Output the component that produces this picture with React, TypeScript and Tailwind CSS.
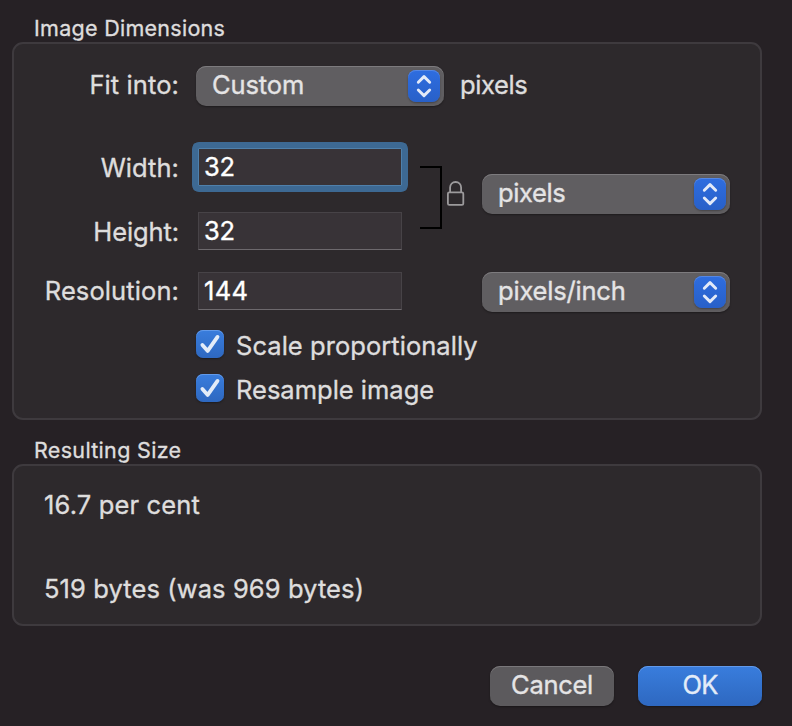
import React from "react";

function Stepper() {
  return (
    <span className="flex h-8 w-8 items-center justify-center rounded-[8px] bg-linear-to-b from-[#2e6de0] to-[#2860c8] shadow-[inset_0_1px_0_#5587e4,0_1px_2px_rgba(0,0,0,0.3)]">
      <svg width="32" height="32" viewBox="0 0 32 32" fill="none" stroke="#e3eaf8" strokeWidth="2.9" strokeLinecap="round" strokeLinejoin="round">
        <path d="M10.3 12.2L16 6.6l5.7 5.6M10.3 20l5.7 5.6 5.7-5.6" />
      </svg>
    </span>
  );
}

function Popup({ value, className }: { value: string; className: string }) {
  return (
    <button className="flex h-10 w-[248px] items-center justify-between rounded-[10px] bg-[#605e61] pr-1 pl-4 shadow-[inset_0_1px_0_#7d7b7e,0_1px_2px_rgba(0,0,0,0.35)]">
      <span className={`-mt-0.5 leading-[38px] text-[#e5e4e5] ${className}`}>{value}</span>
      <Stepper />
    </button>
  );
}

function Label({ text, className }: { text: string; className: string }) {
  return <label className={`mr-px w-[165px] text-right whitespace-nowrap ${className}`}>{text}</label>;
}

function Field({ value, className, focused = false }: { value: string; className: string; focused?: boolean }) {
  return (
    <div
      className={
        focused
          ? "ml-[18px] h-[38px] w-[204px] border border-[#4f80ab] bg-[#383337] shadow-[0_0_0_5px_#3d6993] outline-1 outline-offset-[5px] outline-[#3d6993] rounded-[1px]"
          : "ml-[18px] h-[38px] w-[204px] border border-[#474347] border-b-[#6d696d] bg-[#383337]"
      }
    >
      <span className={`block pl-[5px] leading-9 text-white ${className}`}>{value}</span>
    </div>
  );
}

function Check({ text, className }: { text: string; className: string }) {
  return (
    <div className="flex h-7 items-center">
      <span className="h-7 w-7 rounded-[7px] bg-linear-to-b from-[#397ddd] to-[#2e68c0] shadow-[inset_0_1px_0_#629aea,0_1px_2px_rgba(0,0,0,0.35)]">
        <svg width="28" height="28" viewBox="0 0 28 28" fill="none" stroke="#e3ecf8" strokeWidth="3.8" strokeLinecap="round" strokeLinejoin="round">
          <path d="M6.4 15l5.3 5.9L21.5 6.9" />
        </svg>
      </span>
      <span className={`ml-3 pt-[3px] leading-7 whitespace-nowrap ${className}`}>{text}</span>
    </div>
  );
}

export default function App() {
  return (
    <main className="h-[726px] w-[792px] overflow-hidden bg-[#262125] px-3 pt-3.5 font-['Inter',sans-serif] text-[25.5px] text-[#dedddd] [-webkit-text-stroke:0.35px_currentColor]">
      <h2 className="h-7 pl-[22px] text-[21.5px] leading-7 tracking-[0.28px]">Image Dimensions</h2>
      <section className="h-[378px] w-[750px] rounded-[11px] border-2 border-[#3e3a3e] bg-[#2d292c] pt-[22px]">
        <div className="flex h-10">
          <Label text="Fit into:" className="leading-[38px] tracking-[0.1px]" />
          <div className="ml-4">
            <Popup value="Custom" className="tracking-[-0.1px]" />
          </div>
          <span className="ml-4 leading-[38px] tracking-[-0.4px]">pixels</span>
        </div>
        <div className="mt-[42px] flex h-[100px]">
          <div className="flex flex-col gap-6">
            <div className="flex">
              <Label text="Width:" className="leading-10 tracking-[0.05px]" />
              <Field value="32" focused className="tracking-[-0.2px]" />
            </div>
            <div className="flex">
              <Label text="Height:" className="leading-10 tracking-[-0.1px]" />
              <Field value="32" className="tracking-[-0.2px]" />
            </div>
          </div>
          <div className="mt-[18px] ml-[18px] h-[63px] w-[22px] border-2 border-l-0 border-black" />
          <svg className="mt-[32px] ml-1" width="20" height="28" viewBox="0 0 20 28" fill="none" stroke="#9c9a9c" strokeWidth="1.8">
            <rect x="1.9" y="12.4" width="15.4" height="12.4" rx="1.4" />
            <path d="M4.1 12.4V7.6C4.1 4.2 6.4 2 9.6 2s5.5 2.2 5.5 5.6v4.8" />
          </svg>
          <div className="mt-[26px] ml-4">
            <Popup value="pixels" className="tracking-[-0.4px]" />
          </div>
        </div>
        <div className="mt-6 flex h-10">
          <Label text="Resolution:" className="leading-[38px] tracking-[0.1px]" />
          <Field value="144" className="tracking-[0.3px]" />
          <div className="ml-20">
            <Popup value="pixels/inch" className="tracking-[-0.2px]" />
          </div>
        </div>
        <div className="mt-[18px] ml-[182px] flex flex-col gap-4">
          <Check text="Scale proportionally" className="tracking-[0.05px]" />
          <Check text="Resample image" className="tracking-[0px]" />
        </div>
      </section>
      <h2 className="mt-4 h-7 pl-[22px] text-[21.5px] leading-7 tracking-[0.32px]">Resulting Size</h2>
      <section className="h-[162px] w-[750px] rounded-[11px] border-2 border-[#3e3a3e] bg-[#2d292c] pt-5 pl-[30px]">
        <p className="h-10 leading-[38px] tracking-[0.15px]">16.7 per cent</p>
        <p className="mt-11 h-10 leading-[38px] tracking-[0.1px]">519 bytes (was 969 bytes)</p>
      </section>
      <footer className="mt-10 flex w-[750px] justify-end gap-6">
        <button className="h-10 w-[124px] rounded-[10px] bg-[#5c5a5d] leading-[38px] pb-0.5 tracking-[-0.3px] text-[#e5e4e5] shadow-[inset_0_1px_0_#7a787b,0_1px_2px_rgba(0,0,0,0.35)]">Cancel</button>
        <button className="h-10 w-[124px] rounded-[10px] bg-linear-to-b from-[#397ddd] to-[#2e68c0] leading-[38px] pb-0.5 tracking-[-0.8px] text-[#e3ecf8] shadow-[inset_0_1px_0_#629aea,0_1px_2px_rgba(0,0,0,0.35)]">OK</button>
      </footer>
    </main>
  );
}
